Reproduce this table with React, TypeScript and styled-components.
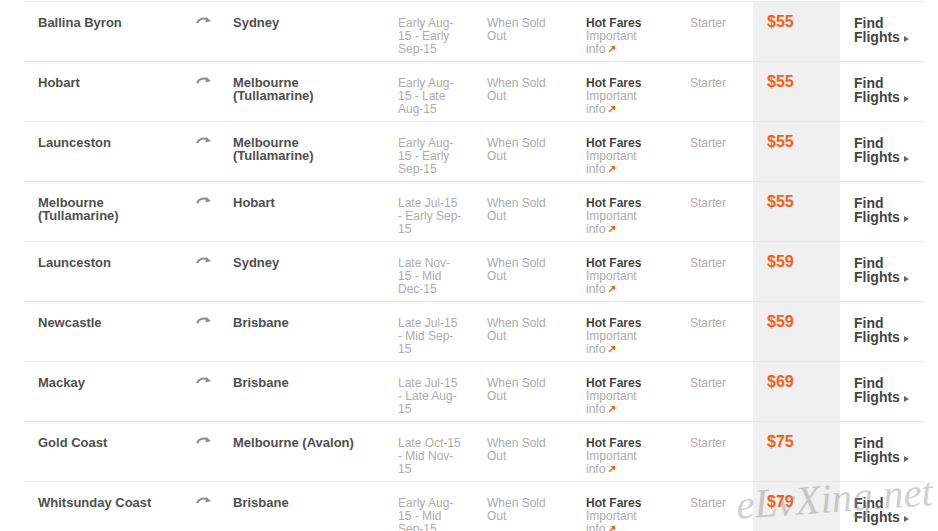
import React from 'react';
import styled, { createGlobalStyle } from 'styled-components';

type Fare = {
  from: string;
  to: string;
  dates: string;
  price: string;
}

const fares: Fare[] = [
  { from: 'Ballina Byron', to: 'Sydney', dates: 'Early Aug-15 - Early Sep-15', price: '$55' },
  { from: 'Hobart', to: 'Melbourne (Tullamarine)', dates: 'Early Aug-15 - Late Aug-15', price: '$55' },
  { from: 'Launceston', to: 'Melbourne (Tullamarine)', dates: 'Early Aug-15 - Early Sep-15', price: '$55' },
  { from: 'Melbourne (Tullamarine)', to: 'Hobart', dates: 'Late Jul-15 - Early Sep-15', price: '$55' },
  { from: 'Launceston', to: 'Sydney', dates: 'Late Nov-15 - Mid Dec-15', price: '$59' },
  { from: 'Newcastle', to: 'Brisbane', dates: 'Late Jul-15 - Mid Sep-15', price: '$59' },
  { from: 'Mackay', to: 'Brisbane', dates: 'Late Jul-15 - Late Aug-15', price: '$69' },
  { from: 'Gold Coast', to: 'Melbourne (Avalon)', dates: 'Late Oct-15 - Mid Nov-15', price: '$75' },
  { from: 'Whitsunday Coast', to: 'Brisbane', dates: 'Early Aug-15 - Mid Sep-15', price: '$79' },
];

const GlobalStyle = createGlobalStyle`
  html, body {
    margin: 0;
    padding: 0;
    background: #fff;
    overflow: hidden;
  }
  body {
    font-family: "Liberation Sans", Arial, sans-serif;
  }
`

const Page = styled.div`
  position: relative;
  width: 938px;
  height: 531px;
  overflow: hidden;
  padding: 1px 0 0 24px;
  box-sizing: border-box;
`

const Table = styled.div`
  width: 900px;
  border-top: 1px solid #e9e9e9;
`

const Row = styled.div`
  display: grid;
  grid-template-columns: 158px 37px 165px 89px 99px 104px 77px 87px 84px;
  height: 60px;
  box-sizing: border-box;
  border-bottom: 1px solid #e9e9e9;
`

const Cell = styled.div<{ $shaded?: boolean; $tight?: boolean }>`
  padding: 14px ${p => (p.$tight ? '11px' : '14px')} 0 14px;
  box-sizing: border-box;
  background: ${p => (p.$shaded ? '#f0f0f0' : 'transparent')};
`

const Place = styled.div`
  font-size: 13px;
  line-height: 13px;
  font-weight: bold;
  color: #4f4f4f;
`

const Muted = styled.div`
  font-size: 12px;
  line-height: 13px;
  margin-top: 1px;
  color: #acacac;
`

const FareName = styled.div`
  font-size: 12px;
  line-height: 13px;
  margin-top: 1px;
  font-weight: bold;
  color: #444;
`

const InfoText = styled.div`
  width: 60px;
  font-size: 12px;
  line-height: 13px;
  color: #acacac;
`

const Price = styled.div`
  font-size: 16px;
  line-height: 16px;
  margin-top: -2px;
  font-weight: bold;
  color: #ff5a14;
`

const FindLink = styled.div`
  font-size: 14px;
  line-height: 14px;
  font-weight: bold;
  color: #454545;
`

const Caret = styled.span`
  display: inline-block;
  width: 0;
  height: 0;
  margin-left: 4px;
  border-left: 5px solid #666;
  border-top: 3.5px solid transparent;
  border-bottom: 3.5px solid transparent;
`

const Watermark = styled.div`
  position: absolute;
  left: 736px;
  top: 474px;
  font-family: "Liberation Serif", serif;
  font-style: italic;
  font-size: 41px;
  color: rgba(140, 140, 140, 0.42);
  transform: rotate(-4deg);
  pointer-events: none;
`

function RouteArrow() {
  return (
    <svg width="16" height="8" viewBox="0 0 16 8" style={{ display: 'block' }}>
      <path d="M1 7 C3 2.5 8 1.5 11.5 3.5" fill="none" stroke="#8c8c8c" strokeWidth="2.2" />
      <path d="M10 1 L15 5 L9.5 6.5 Z" fill="#8c8c8c" />
    </svg>
  )
}

function OutArrow() {
  return (
    <svg width="8" height="8" viewBox="0 0 8 8" style={{ marginLeft: 3 }}>
      <path d="M1 7 L6.5 1.5" stroke="#ff5a14" strokeWidth="1.4" />
      <path d="M2.5 1 H7 V5.5 Z" fill="#ff5a14" />
    </svg>
  )
}

function FareRow({ fare }: { fare: Fare }) {
  return (
    <Row>
      <Cell><Place>{fare.from}</Place></Cell>
      <Cell><RouteArrow /></Cell>
      <Cell><Place>{fare.to}</Place></Cell>
      <Cell $tight><Muted>{fare.dates}</Muted></Cell>
      <Cell><Muted>When Sold Out</Muted></Cell>
      <Cell>
        <FareName>Hot Fares</FareName>
        <InfoText>Important info<OutArrow /></InfoText>
      </Cell>
      <Cell><Muted>Starter</Muted></Cell>
      <Cell $shaded><Price>{fare.price}</Price></Cell>
      <Cell><FindLink>Find Flights<Caret /></FindLink></Cell>
    </Row>
  )
}

export default function App() {
  return (
    <Page>
      <GlobalStyle />
      <Table>
        {fares.map((fare, i) => (
          <FareRow key={i} fare={fare} />
        ))}
      </Table>
      <Watermark>eLvXing.net</Watermark>
    </Page>
  )
}
